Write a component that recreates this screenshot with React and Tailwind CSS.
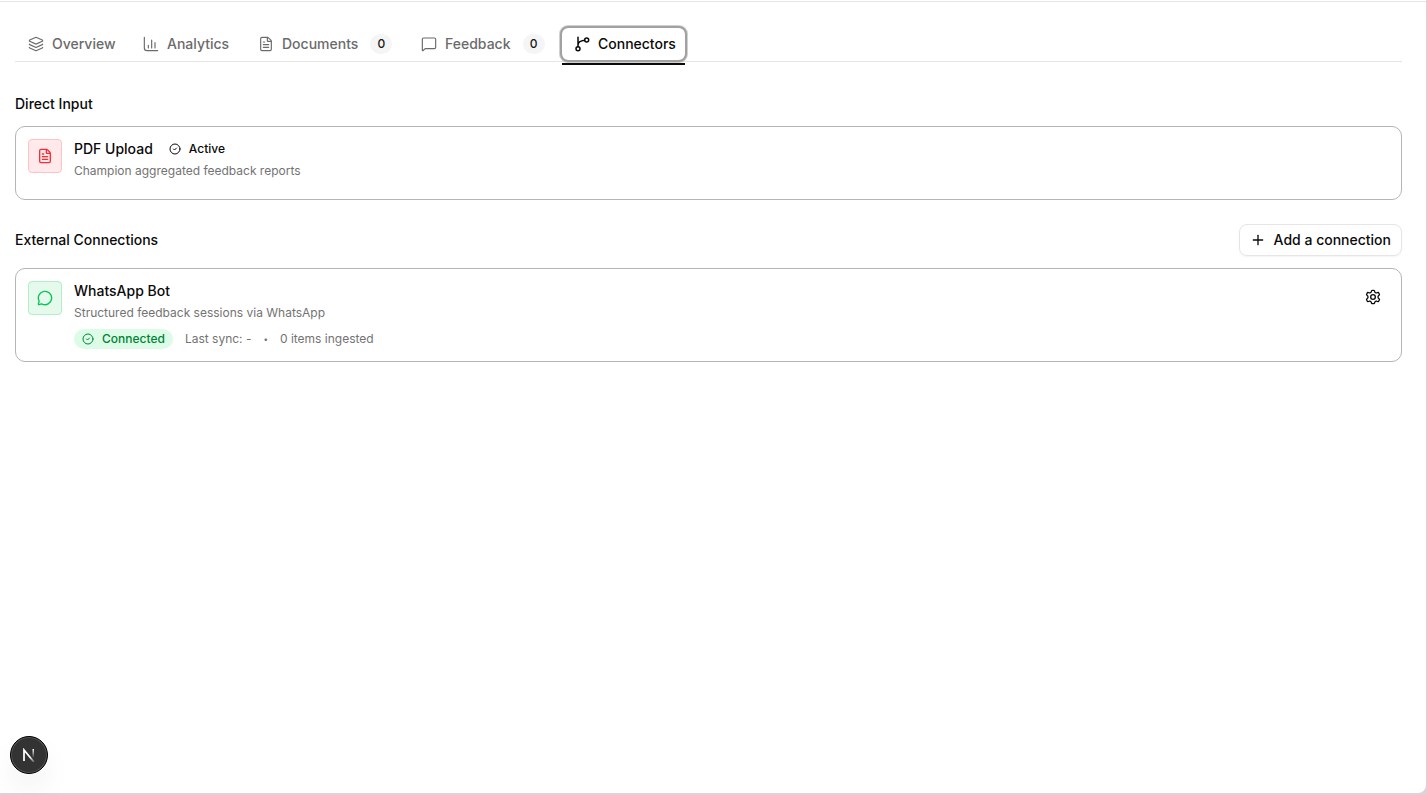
import { CircleCheck, FileText, Layers, MessageCircle, MessageSquare, Plus } from 'lucide-react'

const tabs = [
  { id: 'overview', label: 'Overview', icon: LayersIcon, width: 'min-w-[109px]' },
  { id: 'analytics', label: 'Analytics', icon: ChartIcon, width: 'min-w-[109px]' },
  { id: 'documents', label: 'Documents', icon: DocumentIcon, count: 0, width: 'min-w-[157px]' },
  { id: 'feedback', label: 'Feedback', icon: FeedbackIcon, count: 0, width: 'min-w-[147px]' },
  { id: 'connectors', label: 'Connectors', icon: BranchIcon, active: true, width: 'min-w-[123px]' },
]

function LayersIcon() {
  return <Layers size={16} strokeWidth={1.75} />
}

function ChartIcon() {
  return (
    <svg width="16" height="16" viewBox="0 0 24 24" fill="none" stroke="currentColor" strokeWidth="1.75" strokeLinecap="round" aria-hidden="true">
      <path d="M2 2v16a4 4 0 0 0 4 4h16" />
      <path d="M8 18v-4M13 18V6M18 18v-8" />
    </svg>
  )
}

function DocumentIcon() {
  return <FileText size={16} strokeWidth={1.75} />
}

function FeedbackIcon() {
  return <MessageSquare size={16} strokeWidth={1.75} />
}

function BranchIcon() {
  return (
    <svg width="16" height="16" viewBox="0 0 24 24" fill="none" stroke="currentColor" strokeWidth="2.25" strokeLinecap="round" aria-hidden="true">
      <circle cx="6" cy="19" r="3" />
      <circle cx="19" cy="6" r="3" />
      <path d="M6 2v14M16 6.500C11 7 6 9 6 14" />
    </svg>
  )
}

function GearIcon() {
  return (
    <svg width="16" height="16" viewBox="0 0 24 24" fill="none" stroke="currentColor" strokeWidth="2" strokeLinecap="round" strokeLinejoin="round" aria-hidden="true">
      <path d="M11.500 2C10.800 2 10.500 2 10.200 2.200C9.900 2.400 9.800 2.700 9.600 3.400L9.300 4.400C9.100 4.800 8.800 5.100 8.500 5.300L8.200 5.500C7.700 5.700 7.300 5.800 6.800 5.700L5.600 5.400C4.900 5.200 4.500 5.100 4.200 5.200C3.900 5.300 3.700 5.600 3.300 6.300L2.800 7.100C2.500 7.700 2.300 8.100 2.300 8.400C2.400 8.700 2.600 9 3.100 9.500L4.100 10.600C4.300 11 4.500 11.500 4.500 12C4.500 12.500 4.300 13.100 4.100 13.400L3.100 14.500C2.600 15.100 2.400 15.300 2.300 15.600C2.300 16 2.500 16.300 2.800 16.900L3.300 17.700C3.700 18.400 3.900 18.700 4.200 18.800C4.500 19 4.900 18.900 5.600 18.700L6.800 18.300C7.300 18.200 7.700 18.300 8.200 18.500L8.500 18.700C8.800 18.900 9.100 19.200 9.300 19.600L9.600 20.600C9.800 21.300 9.900 21.600 10.200 21.800C10.500 22 10.800 22 11.500 22H12.500C13.200 22 13.500 22 13.800 21.800C14.100 21.600 14.200 21.300 14.400 20.600L14.700 19.600C14.900 19.200 15.200 18.900 15.500 18.700L15.800 18.500C16.300 18.300 16.700 18.200 17.200 18.300L18.400 18.700C19.100 18.900 19.500 19 19.800 18.800C20.100 18.700 20.300 18.400 20.700 17.700L21.200 16.900C21.500 16.300 21.700 16 21.700 15.600C21.600 15.300 21.400 15.100 20.900 14.500L19.900 13.400C19.700 13.100 19.500 12.500 19.500 12C19.500 11.500 19.700 11 19.900 10.600L20.900 9.500C21.400 9 21.600 8.700 21.700 8.400C21.700 8.100 21.500 7.700 21.200 7.100L20.700 6.300C20.300 5.600 20.100 5.300 19.800 5.200C19.500 5.100 19.100 5.200 18.400 5.400L17.200 5.700C16.700 5.800 16.300 5.700 15.800 5.500L15.500 5.300C15.200 5.100 14.900 4.800 14.700 4.400L14.400 3.400C14.200 2.700 14.100 2.400 13.800 2.200C13.500 2 13.200 2 12.500 2Z" />
      <circle cx="12" cy="12" r="3.500" />
    </svg>
  )
}

function Tab({ tab }) {
  const Icon = tab.icon
  return (
    <button
      type="button"
      role="tab"
      aria-selected={Boolean(tab.active)}
      className={tab.active
        ? `${tab.width} relative flex h-8 shrink-0 items-center gap-2 rounded-md bg-white pr-2 pl-3 text-sm font-medium text-neutral-950 outline-2 outline-[#a1a1a1] ring-3 ring-[#a1a1a1]/50 after:absolute after:inset-x-0 after:-bottom-[5px] after:h-0.5 after:bg-neutral-950`
        : `${tab.width} flex h-8 shrink-0 items-center gap-2 pr-2 pl-3 text-sm font-medium text-[#6b6b6b]`}
    >
      <Icon />
      {tab.label}
      {tab.count !== undefined && (
        <span className="ml-1 flex h-5 w-[22px] items-center justify-center rounded-full bg-neutral-100 text-xs text-neutral-900">{tab.count}</span>
      )}
    </button>
  )
}

function ConnectorCard({ icon, tone, title, status, description, children, action }) {
  return (
    <article className="flex items-start gap-3 rounded-[10px] border border-[#b5b5b5] p-3">
      <div className={`flex size-[34px] shrink-0 items-center justify-center rounded-sm border ${tone}`}>{icon}</div>
      <div className="min-w-0 flex-1">
        <div className="flex h-5 items-center gap-4">
          <h3 className="text-sm font-medium">{title}</h3>
          {status}
        </div>
        <p className="mt-1 text-xs text-[#737373]">{description}</p>
        {children}
      </div>
      {action}
    </article>
  )
}

function NextBadge() {
  return (
    <button type="button" aria-label="Open dev tools" className="fixed bottom-[21px] left-[10px] flex size-[38px] items-center justify-center rounded-full border border-black bg-[#333] shadow-[inset_0_0_0_1px_#555,0_16px_32px_-8px_rgba(0,0,0,0.15)]">
      <svg width="14" height="14" viewBox="0 0 14 14" fill="none" aria-hidden="true">
        <defs>
          <linearGradient id="stem" x1="0" y1="0" x2="0" y2="1">
            <stop stopColor="white" />
            <stop offset="1" stopColor="white" stopOpacity="0" />
          </linearGradient>
          <linearGradient id="diagonal" x1="0" y1="0" x2="1" y2="1">
            <stop offset="0.6" stopColor="white" />
            <stop offset="1" stopColor="white" stopOpacity="0.2" />
          </linearGradient>
        </defs>
        <path d="M2 13V2l10 12" stroke="url(#diagonal)" strokeWidth="1.75" />
        <rect x="10.500" y="1" width="1.500" height="9" fill="url(#stem)" />
      </svg>
    </button>
  )
}

export default function App() {
  return (
    <div className="min-h-screen bg-[#dcd2d7] pr-px pb-0.5 font-['Inter','Liberation_Sans',sans-serif] text-neutral-950">
      <main className="min-h-[calc(100vh-2px)] rounded-br-lg bg-white pr-6 pl-[15px]">
        <div className="-mr-6 -ml-[15px] h-0.5 border-b border-neutral-200" />
        <div role="tablist" className="flex h-[60px] items-end gap-1.5 border-b border-neutral-200 pb-px pl-px">
          {tabs.map((tab) => <Tab tab={tab} key={tab.id} />)}
        </div>

        <section className="mt-8">
          <h2 className="mb-3 text-sm font-medium">Direct Input</h2>
          <ConnectorCard
            icon={<FileText size={16} strokeWidth={2} />}
            tone="border-[#ffc2c5] bg-[#ffe9ea] text-[#fb2c36]"
            title="PDF Upload"
            description="Champion aggregated feedback reports"
            status={(
              <span className="flex items-center gap-2 text-xs font-medium">
                <CircleCheck size={12} strokeWidth={2} />
                Active
              </span>
            )}
          >
            <div className="h-2" />
          </ConnectorCard>
        </section>

        <section className="mt-6">
          <div className="mb-3 flex items-center justify-between">
            <h2 className="text-sm font-medium">External Connections</h2>
            <button type="button" className="flex h-8 items-center gap-2 rounded-lg border border-neutral-200 px-2.5 text-sm font-medium shadow-xs">
              <Plus size={16} strokeWidth={2} />
              Add a connection
            </button>
          </div>
          <ConnectorCard
            icon={<MessageCircle size={16} strokeWidth={2} />}
            tone="border-[#b0efc7] bg-[#e6f9ed] text-[#00c950]"
            title="WhatsApp Bot"
            description="Structured feedback sessions via WhatsApp"
            action={(
              <button type="button" aria-label="Connection settings" className="flex size-8 items-center justify-center">
                <GearIcon />
              </button>
            )}
          >
            <div className="mt-2 flex items-center gap-3 text-xs text-[#737373]">
              <span className="flex h-5 items-center gap-2 rounded-full bg-[#dcfce7] px-2 font-medium text-[#008236]">
                <CircleCheck size={12} strokeWidth={2} />
                Connected
              </span>
              <span>Last sync: -</span>
              <span className="text-[8px]">•</span>
              <span>0 items ingested</span>
            </div>
          </ConnectorCard>
        </section>
      </main>
      <NextBadge />
    </div>
  )
}
